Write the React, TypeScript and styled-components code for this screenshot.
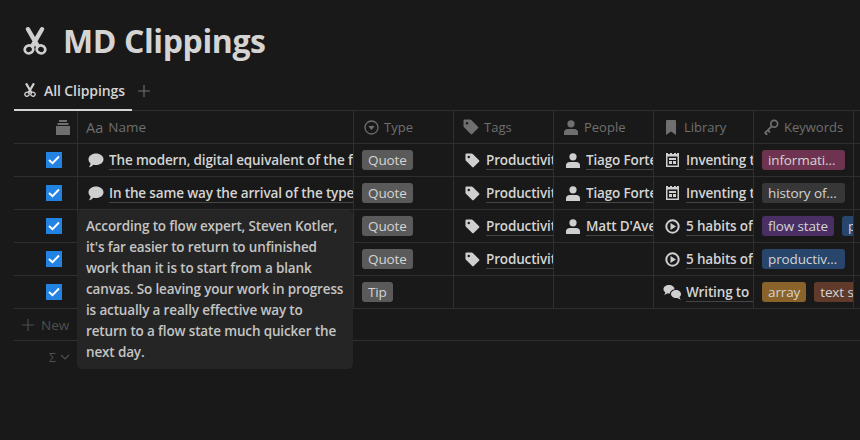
import React from 'react'
import styled, { createGlobalStyle } from 'styled-components'

const TEXT = '#d4d4d4'
const MUTED = '#6f6f6f'
const LINE = '#2f2f2f'
const COLUMNS = '64px 276px 100px 100px 100px 100px 100px 6px'

const GlobalStyle = createGlobalStyle`
  html, body {
    margin: 0;
    height: 100%;
    background: #191919;
    overflow: hidden;
  }
  body {
    font-family: "Open Sans", "Noto Sans", "Liberation Sans", sans-serif;
    color: ${TEXT};
  }
`

const Page = styled.div`
  width: 860px;
  height: 440px;
  padding: 0 0 0 14px;
  box-sizing: border-box;
  overflow: hidden;
`

const TitleRow = styled.div`
  display: flex;
  align-items: center;
  gap: 16px;
  height: 72px;
  padding: 10px 0 0 9px;
  box-sizing: border-box;
`

const Title = styled.h1`
  margin: 0;
  font-size: 32px;
  line-height: 40px;
  font-weight: 700;
  letter-spacing: -0.4px;
  color: ${TEXT};
`

const Tabs = styled.div`
  display: flex;
  align-items: center;
  height: 38px;
  border-bottom: 1px solid ${LINE};
`

const Tab = styled.div`
  display: flex;
  align-items: center;
  gap: 8px;
  width: 118px;
  height: 38px;
  padding-left: 10px;
  box-sizing: border-box;
  border-bottom: 2px solid ${TEXT};
  margin-bottom: -1px;
  font-size: 14px;
  font-weight: 600;
  letter-spacing: -0.1px;
  color: ${TEXT};
`

const AddView = styled.div`
  display: flex;
  margin-left: 6px;
  color: ${MUTED};
`

const Table = styled.div`
  position: relative;
`

const Row = styled.div`
  display: grid;
  grid-template-columns: ${COLUMNS};
  height: 33px;
  box-sizing: border-box;
  border-bottom: 1px solid ${LINE};
`

const Cell = styled.div`
  display: flex;
  align-items: center;
  min-width: 0;
  overflow: hidden;
  padding-left: 8px;
  box-sizing: border-box;
  border-right: 1px solid ${LINE};
`

const NameCell = styled(Cell)`
  padding-left: 7px;
`

const EndCell = styled.div``

const SelectCell = styled(Cell)`
  justify-content: flex-end;
  padding: 0 15px 0 0;
`

const StackCell = styled(SelectCell)`
  padding-right: 7px;
`

const HeadCell = styled(Cell)`
  gap: 5px;
  padding-left: 9px;
  font-size: 13px;
  color: ${MUTED};
  white-space: nowrap;
`

const NameHead = styled(HeadCell)`
  padding-left: 8px;
  font-size: 13.5px;
`

const Aa = styled.span`
  font-size: 14.5px;
`

const IconSlot = styled.span<{ $width: number }>`
  display: flex;
  flex: none;
  justify-content: center;
  width: ${p => p.$width}px;

  svg {
    flex: none;
  }
`

const Check = styled.div`
  display: flex;
  align-items: center;
  justify-content: center;
  width: 16px;
  height: 16px;
  background: #2383e2;
  color: #fff;
`

const LinkWrap = styled.div`
  display: flex;
  align-items: center;
  gap: 6px;
  flex: 1;
  min-width: 0;
  padding-left: 3px;
`

const LinkText = styled.span`
  flex: 1;
  min-width: 0;
  overflow: hidden;
  white-space: nowrap;
  font-size: 13.5px;
  line-height: 18px;
  font-weight: 600;
  letter-spacing: -0.15px;
  color: ${TEXT};
  border-bottom: 1px solid #444;
`

const Pills = styled.div`
  display: flex;
  gap: 8px;
`

const Pill = styled.span<{ $bg: string; $fixed?: boolean }>`
  display: block;
  flex: none;
  height: 20px;
  line-height: 20px;
  padding: 0 6px;
  box-sizing: border-box;
  border-radius: 3px;
  background: ${p => p.$bg};
  color: ${TEXT};
  font-size: 13.5px;
  letter-spacing: -0.12px;
  white-space: nowrap;
  ${p => p.$fixed && 'width: 83px; overflow: hidden; text-overflow: ellipsis;'}
`

const NewRow = styled.div`
  display: flex;
  align-items: center;
  gap: 7px;
  height: 32px;
  padding-left: 8px;
  box-sizing: border-box;
  border-bottom: 1px solid ${LINE};
  font-size: 13.5px;
  color: #4f4f4f;
`

const CalcRow = styled.div`
  display: flex;
  align-items: center;
  gap: 4px;
  height: 32px;
  padding-left: 35px;
  font-size: 12px;
  color: #4f4f4f;
`

const Tooltip = styled.div`
  position: absolute;
  top: 99px;
  left: 63px;
  width: 276px;
  height: 159px;
  padding: 6px 8px 0 9px;
  box-sizing: border-box;
  border-radius: 5px;
  background: #252525;
  color: #c4c4c4;
  font-size: 13.5px;
  line-height: 21px;
  font-weight: 600;
  letter-spacing: -0.15px;
`

const Scissors = ({ size }: { size: number }) => (
  <svg width={size} height={size * 1.17} viewBox="0 0 24 28" fill="none" stroke="#cfcfcf">
    <path d="M5 2.2 L14.5 18.5 M19 2.2 L9.5 18.5" strokeWidth="4.4" strokeLinecap="round" />
    <ellipse cx="6" cy="22.4" rx="4.3" ry="3.9" strokeWidth="2.7" transform="rotate(-20 6 22.4)" />
    <ellipse cx="18" cy="22.4" rx="4.3" ry="3.9" strokeWidth="2.7" transform="rotate(20 18 22.4)" />
  </svg>
)

const Plus = ({ size }: { size: number }) => (
  <svg width={size} height={size} viewBox="0 0 12 12" stroke="currentColor" strokeWidth="1.1">
    <path d="M6 0 V12 M0 6 H12" />
  </svg>
)

const Stack = () => (
  <svg width="14" height="15" viewBox="0 0 14 15" fill={MUTED}>
    <rect x="0" y="6" width="14" height="9" />
    <rect x="1.5" y="3" width="11" height="2" />
    <rect x="3" y="0" width="8" height="2" />
  </svg>
)

const SelectIcon = () => (
  <svg width="15" height="15" viewBox="0 0 15 15" fill="none">
    <circle cx="7.5" cy="7.5" r="6.5" stroke={MUTED} strokeWidth="1.3" />
    <path d="M4.3 6 H10.7 L7.5 10 Z" fill={MUTED} />
  </svg>
)

const TagIcon = ({ color, size }: { color: string; size: number }) => (
  <svg width={size} height={size} viewBox="0 0 16 16" fill={color}>
    <path d="M0.5 1.5 Q0.5 0.5 1.5 0.5 H7 Q7.8 0.5 8.3 1 L15 7.7 Q15.8 8.5 15 9.3 L9.3 15 Q8.5 15.8 7.7 15 L1 8.3 Q0.5 7.8 0.5 7 Z M4 3 A1.3 1.3 0 1 0 4 5.6 A1.3 1.3 0 1 0 4 3 Z" fillRule="evenodd" />
  </svg>
)

const PersonIcon = ({ color }: { color: string }) => (
  <svg width="14" height="15" viewBox="0 0 14 15" fill={color}>
    <circle cx="7" cy="3.8" r="3.6" />
    <path d="M0 15 V12.5 Q0 9 4 9 H10 Q14 9 14 12.5 V15 Z" />
  </svg>
)

const BookmarkIcon = () => (
  <svg width="10" height="15" viewBox="0 0 10 15" fill={MUTED}>
    <path d="M0 1 Q0 0 1 0 H9 Q10 0 10 1 V15 L5 11.5 L0 15 Z" />
  </svg>
)

const KeyIcon = () => (
  <svg width="16" height="16" viewBox="0 0 15 15" fill="none" stroke={MUTED}>
    <circle cx="10.5" cy="4.5" r="3.2" strokeWidth="1.6" />
    <path d="M8 7 L1.5 13.5 M2 13 L4 15 M4.5 10.5 L6.5 12.5" strokeWidth="1.7" />
  </svg>
)

const BubbleIcon = () => (
  <svg width="16" height="15" viewBox="0 0 16 15" fill="#cfcfcf">
    <path d="M8 0.5 C12.2 0.5 15.5 3 15.5 6.3 C15.5 9.6 12.2 12.1 8 12.1 C7 12.1 6 12 5.2 11.7 C4.2 13 2.6 14 0.8 14.3 C1.8 13.2 2.4 11.9 2.5 10.5 C1.2 9.4 0.5 8 0.5 6.3 C0.5 3 3.8 0.5 8 0.5 Z" />
  </svg>
)

const PageTableIcon = () => (
  <svg width="13" height="14" viewBox="0 0 13 14" fill="#cfcfcf">
    <path d="M0 0 H2 V1 H4 V0 H6 V1 H8 V0 H10 V1 H11 V0 H13 V14 H0 Z M1.5 3.5 V12.5 H11.5 V3.5 Z" fillRule="evenodd" />
    <rect x="3" y="5" width="7" height="2" />
    <rect x="3" y="8" width="3" height="3" />
    <rect x="7" y="8" width="3" height="3" />
  </svg>
)

const PlayIcon = () => (
  <svg width="15" height="15" viewBox="0 0 15 15" fill="none">
    <circle cx="7.5" cy="7.5" r="6.2" stroke="#cfcfcf" strokeWidth="2" />
    <path d="M5.5 4 L11 7.5 L5.5 11 Z" fill="#cfcfcf" />
  </svg>
)

const ChatIcon = () => (
  <svg width="19" height="15" viewBox="0 0 19 15" fill="#cfcfcf">
    <path d="M6 0 C9 0 11.5 1.8 11.5 4.2 C9 4.5 7 6.2 6.8 8.4 L6 8.5 C5.4 8.5 5 8.4 4.5 8.3 C3.5 9 2.3 9.6 1 9.8 C1.8 9 2.2 8.2 2.3 7.2 C1 6.4 0.5 5.4 0.5 4.2 C0.5 1.8 3 0 6 0 Z" />
    <path d="M13 5 C15.8 5 18 6.8 18 9 C18 10.2 17.5 11.2 16.5 11.9 C16.6 12.9 17.2 13.8 18 14.6 C16.7 14.4 15.4 13.8 14.4 12.9 C14 13 13.5 13 13 13 C10.2 13 8 11.2 8 9 C8 6.8 10.2 5 13 5 Z" />
  </svg>
)

const CheckBox = () => (
  <Check>
    <svg width="12" height="10" viewBox="0 0 12 10" fill="none" stroke="currentColor" strokeWidth="1.9">
      <path d="M1 5 L4.5 8.2 L11 1.5" />
    </svg>
  </Check>
)

const Chevron = () => (
  <svg width="10" height="6" viewBox="0 0 10 6" fill="none" stroke="currentColor" strokeWidth="1.1">
    <path d="M1 1 L5 5 L9 1" />
  </svg>
)

const TOOLTIP_TEXT =
  "According to flow expert, Steven Kotler, it's far easier to return to unfinished work than it is to start from a blank canvas. So leaving your work in progress is actually a really effective way to return to a flow state much quicker the next day."

const GREY = '#5a5a5a'
const QUOTE = { label: 'Quote', bg: GREY }
const TIP = { label: 'Tip', bg: GREY }

type Keyword = { label: string; bg: string; fixed?: boolean }
type Clipping = {
  name?: string
  type: { label: string; bg: string }
  tag?: string
  person?: string
  library: { icon: React.ReactNode; text: string }
  keywords: Keyword[]
}

const INVENTING = { icon: <PageTableIcon />, text: 'Inventing the' }
const HABITS = { icon: <PlayIcon />, text: '5 habits of' }

const ROWS: Clipping[] = [
  {
    name: 'The modern, digital equivalent of the feed',
    type: QUOTE,
    tag: 'Productivity',
    person: 'Tiago Forte',
    library: INVENTING,
    keywords: [{ label: 'information', bg: '#6e3350', fixed: true }]
  },
  {
    name: 'In the same way the arrival of the typewriter',
    type: QUOTE,
    tag: 'Productivity',
    person: 'Tiago Forte',
    library: INVENTING,
    keywords: [{ label: 'history of tools', bg: '#373737', fixed: true }]
  },
  {
    type: QUOTE,
    tag: 'Productivity',
    person: "Matt D'Avella",
    library: HABITS,
    keywords: [
      { label: 'flow state', bg: '#492f64' },
      { label: 'productivity', bg: '#28456c' }
    ]
  },
  {
    type: QUOTE,
    tag: 'Productivity',
    library: HABITS,
    keywords: [{ label: 'productivity', bg: '#28456c', fixed: true }]
  },
  {
    type: TIP,
    library: { icon: <ChatIcon />, text: 'Writing to' },
    keywords: [
      { label: 'array', bg: '#89632a' },
      { label: 'text style', bg: '#603b2c' }
    ]
  }
]

function PageLink({ icon, text }: { icon: React.ReactNode; text: string }) {
  return (
    <LinkWrap>
      <IconSlot $width={15}>{icon}</IconSlot>
      <LinkText>{text}</LinkText>
    </LinkWrap>
  )
}

function Head({ icon, label }: { icon: React.ReactNode; label: string }) {
  return (
    <HeadCell>
      <IconSlot $width={16}>{icon}</IconSlot>
      {label}
    </HeadCell>
  )
}

function App() {
  return (
    <Page>
      <GlobalStyle />
      <TitleRow>
        <Scissors size={24} />
        <Title>MD Clippings</Title>
      </TitleRow>
      <Tabs>
        <Tab>
          <Scissors size={12} />
          All Clippings
        </Tab>
        <AddView>
          <Plus size={12} />
        </AddView>
      </Tabs>
      <Table>
        <Row>
          <StackCell><Stack /></StackCell>
          <NameHead>
            <Aa>Aa</Aa>
            <span>Name</span>
          </NameHead>
          <Head icon={<SelectIcon />} label="Type" />
          <Head icon={<TagIcon color={MUTED} size={16} />} label="Tags" />
          <Head icon={<PersonIcon color={MUTED} />} label="People" />
          <Head icon={<BookmarkIcon />} label="Library" />
          <Head icon={<KeyIcon />} label="Keywords" />
          <EndCell />
        </Row>
        {ROWS.map((row, i) => (
          <Row key={i}>
            <SelectCell><CheckBox /></SelectCell>
            <NameCell>
              {row.name && <PageLink icon={<BubbleIcon />} text={row.name} />}
            </NameCell>
            <Cell>
              <Pill $bg={row.type.bg}>{row.type.label}</Pill>
            </Cell>
            <Cell>
              {row.tag && <PageLink icon={<TagIcon color="#cfcfcf" size={15} />} text={row.tag} />}
            </Cell>
            <Cell>
              {row.person && <PageLink icon={<PersonIcon color="#cfcfcf" />} text={row.person} />}
            </Cell>
            <Cell>
              <PageLink icon={row.library.icon} text={row.library.text} />
            </Cell>
            <Cell>
              <Pills>
                {row.keywords.map(k => (
                  <Pill key={k.label} $bg={k.bg} $fixed={k.fixed}>{k.label}</Pill>
                ))}
              </Pills>
            </Cell>
            <EndCell />
          </Row>
        ))}
        <NewRow>
          <Plus size={12} />
          New
        </NewRow>
        <CalcRow>
          Σ <Chevron />
        </CalcRow>
        <Tooltip>{TOOLTIP_TEXT}</Tooltip>
      </Table>
    </Page>
  )
}

export default App
